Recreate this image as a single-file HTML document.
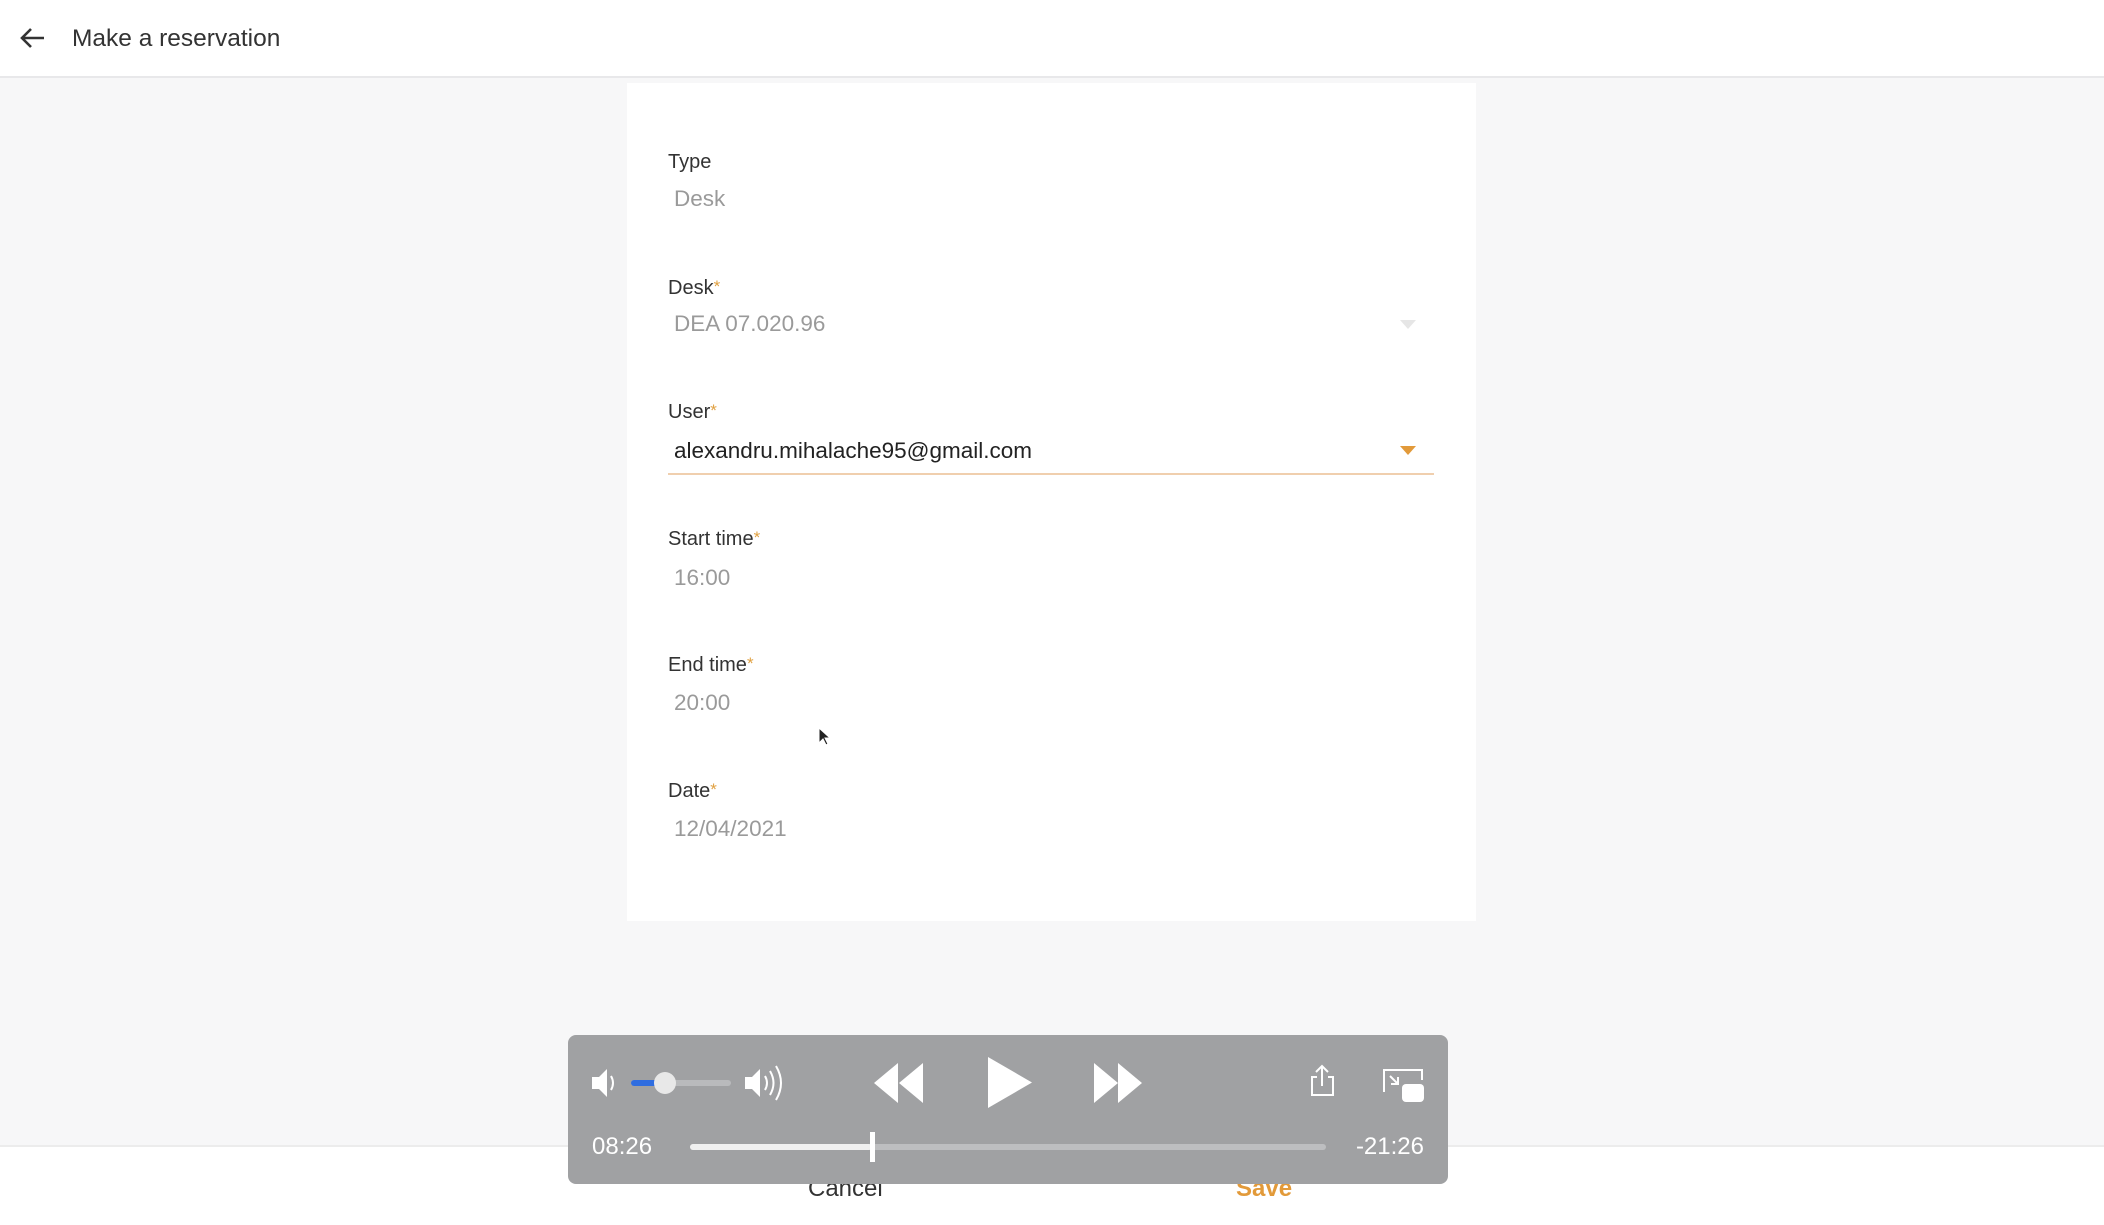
<!DOCTYPE html>
<html><head><meta charset="utf-8"><style>
*{margin:0;padding:0;box-sizing:border-box}
body{width:2104px;height:1225px;background:#f7f7f8;font-family:"Liberation Sans",sans-serif;position:relative;overflow:hidden}
.top{position:absolute;left:0;top:0;width:2104px;height:78px;background:#fff;border-bottom:2px solid #e8e8ea}
.title{position:absolute;left:72px;top:25px;font-size:24.5px;color:#333}
.card{position:absolute;left:627px;top:83px;width:849px;height:838px;background:#fff}
.lab{position:absolute;left:668px;font-size:20px;color:#333}
.lab b{color:#e0a040;font-weight:normal;font-size:17px;vertical-align:top}
.val{position:absolute;left:674px;font-size:22.5px;color:#9a9a9a}
.bot{position:absolute;left:0;top:1145px;width:2104px;height:80px;background:#fff;border-top:2px solid #ececec}
.ctl{position:absolute;left:568px;top:1035px;width:880px;height:149px;background:#a0a1a3;border-radius:8px}
.t{position:absolute;color:#fff;font-size:24px;top:1133px}
</style></head><body>
<div class="top">
<svg style="position:absolute;left:18px;top:26px" width="28" height="24" viewBox="0 0 28 24"><path d="M26 12H4M13 3L4 12l9 9" fill="none" stroke="#333" stroke-width="2.6"/></svg>
<div class="title">Make a reservation</div>
</div>
<div class="card"></div>
<div class="lab" style="top:151px">Type</div>
<div class="val" style="top:186px">Desk</div>
<div class="lab" style="top:277px">Desk<b>*</b></div>
<div class="val" style="top:311px">DEA 07.020.96</div>
<svg style="position:absolute;left:1400px;top:320px" width="16" height="10"><path d="M0 0h16L8 9z" fill="#e6e6e6"/></svg>
<div class="lab" style="top:401px">User<b>*</b></div>
<div class="val" style="top:438px;color:#222">alexandru.mihalache95@gmail.com</div>
<svg style="position:absolute;left:1400px;top:446px" width="16" height="10"><path d="M0 0h16L8 9z" fill="#e29a3a"/></svg>
<div style="position:absolute;left:668px;top:473px;width:766px;height:2px;background:#f0cfae"></div>
<div class="lab" style="top:528px">Start time<b>*</b></div>
<div class="val" style="top:565px">16:00</div>
<div class="lab" style="top:654px">End time<b>*</b></div>
<div class="val" style="top:690px">20:00</div>
<div class="lab" style="top:780px">Date<b>*</b></div>
<div class="val" style="top:816px">12/04/2021</div>
<svg style="position:absolute;left:818px;top:727px" width="14" height="20"><path d="M1 1v15l4-4 3 6 2-1-3-6h5z" fill="#222" stroke="#fff" stroke-width="1"/></svg>
<div class="bot">
<div style="position:absolute;left:808px;top:28px;font-size:24px;color:#333">Cancel</div>
<div style="position:absolute;left:1236px;top:28px;font-size:24px;color:#e29a3a;font-weight:bold">Save</div>
</div>
<div class="ctl"></div>
<svg style="position:absolute;left:0;top:0" width="2104" height="1225">
<g fill="#fff">
<path d="M592 1077h7l8-8v28l-8-8h-7z"/>
<path d="M611 1076q4 7 0 14" stroke="#fff" stroke-width="2" fill="none"/>
<rect x="631" y="1080" width="100" height="6" rx="3" fill="#b9babc"/>
<rect x="631" y="1080" width="34" height="6" rx="3" fill="#2f6de0"/>
<circle cx="665" cy="1083" r="11" fill="#e8e8e8"/>
<path d="M745 1077h7l8-8v28l-8-8h-7z"/>
<g stroke="#fff" stroke-width="2" fill="none"><path d="M765 1076q4 7 0 14"/><path d="M770 1071q7 12 0 24"/><path d="M776 1066q10 17 0 34"/></g>
<path d="M874 1083l24-20v40z M899 1083l24-20v40z"/>
<path d="M988 1057v51l44-25.5z"/>
<path d="M1094 1063v40l24-20z M1118 1063v40l24-20z"/>
<g stroke="#fff" stroke-width="2" fill="none"><path d="M1317 1077h-5v18h21v-18h-5"/><path d="M1322 1086v-20M1316 1072l6-6 6 6"/><path d="M1384 1092v-22h38v10"/><path d="M1390 1076l8 8M1398 1077v7h-7"/></g>
<rect x="1402" y="1084" width="22" height="18" rx="4"/>
<rect x="690" y="1144" width="636" height="6" rx="3" fill="#bdbec0"/>
<rect x="690" y="1144" width="182" height="6" rx="3" fill="#f0f0f0"/>
<rect x="870" y="1132" width="5" height="30" fill="#fff"/>
</g>
</svg>
<div class="t" style="left:592px">08:26</div>
<div class="t" style="right:680px">‑21:26</div>
</body></html>
